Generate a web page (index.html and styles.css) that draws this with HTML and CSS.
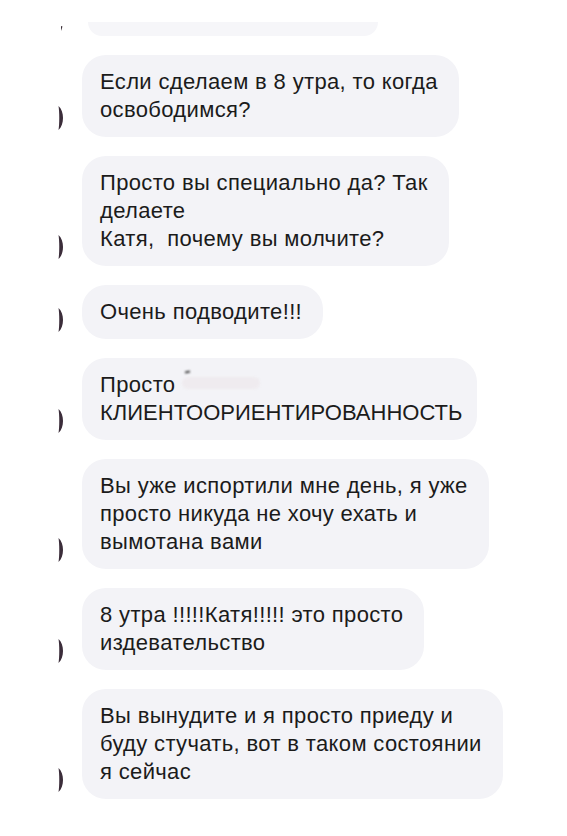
FILE: index.html
```html
<!DOCTYPE html>
<html lang="ru">
<head>
<meta charset="utf-8">
<link rel="stylesheet" href="styles.css">
</head>
<body>
<div class="chat">
  <div class="row row-stub">
    <span class="av av-top"><svg width="4" height="5" viewBox="0 0 4 5"><path d="M2 0 L3.5 0.5 L2 5 Z" fill="#3a3038"/></svg></span>
    <div class="stub"></div>
  </div>

  <div class="row">
    <span class="av"><svg width="8" height="24" viewBox="0 0 8 24"><path d="M1.5 0 C7.5 5 7.5 19 1.5 24 C2.5 18 2.5 6 1.5 0 Z" fill="#3b2d3a"/></svg></span>
    <div class="bubble">Если сделаем в 8 утра, то когда<br>освободимся?</div>
  </div>

  <div class="row">
    <span class="av"><svg width="8" height="24" viewBox="0 0 8 24"><path d="M1.5 0 C7.5 5 7.5 19 1.5 24 C2.5 18 2.5 6 1.5 0 Z" fill="#3b2d3a"/></svg></span>
    <div class="bubble">Просто вы специально да? Так<br>делаете<br>Катя,&nbsp; почему вы молчите?</div>
  </div>

  <div class="row">
    <span class="av"><svg width="8" height="24" viewBox="0 0 8 24"><path d="M1.5 0 C7.5 5 7.5 19 1.5 24 C2.5 18 2.5 6 1.5 0 Z" fill="#3b2d3a"/></svg></span>
    <div class="bubble">Очень подводите!!!</div>
  </div>

  <div class="row">
    <span class="av"><svg width="8" height="24" viewBox="0 0 8 24"><path d="M1.5 0 C7.5 5 7.5 19 1.5 24 C2.5 18 2.5 6 1.5 0 Z" fill="#3b2d3a"/></svg></span>
    <div class="bubble bubble-caps">Просто <span class="redact"><span class="redact-dash"></span></span><br><span class="caps">КЛИЕНТООРИЕНТИРОВАННОСТЬ</span></div>
  </div>

  <div class="row">
    <span class="av"><svg width="8" height="24" viewBox="0 0 8 24"><path d="M1.5 0 C7.5 5 7.5 19 1.5 24 C2.5 18 2.5 6 1.5 0 Z" fill="#3b2d3a"/></svg></span>
    <div class="bubble">Вы уже испортили мне день, я уже<br>просто никуда не хочу ехать и<br>вымотана вами</div>
  </div>

  <div class="row">
    <span class="av"><svg width="8" height="24" viewBox="0 0 8 24"><path d="M1.5 0 C7.5 5 7.5 19 1.5 24 C2.5 18 2.5 6 1.5 0 Z" fill="#3b2d3a"/></svg></span>
    <div class="bubble">8 утра !!!!!Катя!!!!! это просто<br>издевательство</div>
  </div>

  <div class="row">
    <span class="av"><svg width="8" height="24" viewBox="0 0 8 24"><path d="M1.5 0 C7.5 5 7.5 19 1.5 24 C2.5 18 2.5 6 1.5 0 Z" fill="#3b2d3a"/></svg></span>
    <div class="bubble">Вы вынудите и я просто приеду и<br>буду стучать, вот в таком состоянии<br>я сейчас</div>
  </div>
</div>
</body>
</html>
```

FILE: styles.css
```css
html, body {
  margin: 0;
  padding: 0;
  background: #ffffff;
}

body {
  width: 567px;
  height: 836px;
  overflow: hidden;
  font-family: "Liberation Sans", Arial, sans-serif;
  color: #1b1b1b;
}

.chat {
  display: flex;
  flex-direction: column;
  gap: 19px;
  padding: 22px 0 0 56px;
}

.row {
  display: flex;
  align-items: flex-end;
}

.av {
  flex: 0 0 26px;
  display: flex;
  align-items: flex-end;
  padding-left: 1px;
  margin-bottom: 7px;
  box-sizing: border-box;
}

.av svg {
  display: block;
}

.row-stub {
  align-items: flex-start;
}

.av-top {
  margin: 4px 0 0 0;
  padding-left: 3px;
}

.stub {
  width: 290px;
  height: 14px;
  margin-left: 6px;
  background: #f6f6f9;
  border-radius: 0 0 22px 22px;
}

.bubble {
  background: #f3f3f7;
  border-radius: 24px;
  padding: 13px 21px 13px 18px;
  font-size: 22px;
  line-height: 28px;
  letter-spacing: 0.35px;
  white-space: nowrap;
}

.bubble-caps {
  padding-right: 15px;
}

.caps {
  letter-spacing: 0;
}

.redact {
  position: relative;
  display: inline-block;
  width: 78px;
  height: 12px;
  background: #efebef;
  border-radius: 6px;
  filter: blur(1px);
  vertical-align: 3px;
}

.redact-dash {
  position: absolute;
  left: 3px;
  top: -6px;
  width: 5px;
  height: 2px;
  background: #444;
  transform: rotate(-12deg);
}
```
